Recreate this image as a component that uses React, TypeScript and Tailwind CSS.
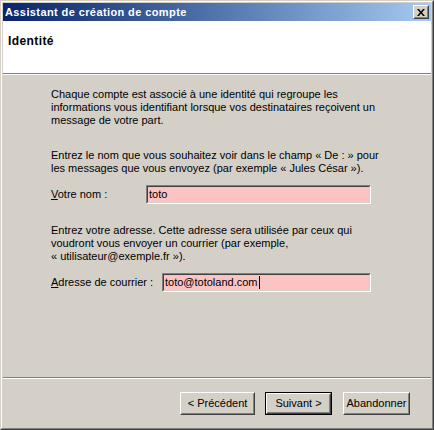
import React from "react";

const font = { fontFamily: '"Liberation Sans", Arial, sans-serif' };

const WinButton: React.FC<{ label: string; isDefault?: boolean; width: string; className?: string }> = ({
  label,
  isDefault,
  width,
  className,
}) => {
  return (
    <div className={`${isDefault ? "border border-black" : ""} ${className ?? ""}`}>
      <div className="border border-t-white border-l-white border-r-[#404040] border-b-[#404040]">
        <div
          className={`flex items-center justify-center border border-t-[#d4d0c8] border-l-[#d4d0c8] border-r-[#808080] border-b-[#808080] bg-[#d4d0c8] text-[11px] text-black ${
            isDefault ? "h-[19px]" : "h-[21px]"
          } ${width}`}
        >
          {label}
        </div>
      </div>
    </div>
  );
};

const Field: React.FC<{ value: string; width: string; caret?: boolean }> = ({ value, width, caret }) => {
  return (
    <div className={`border border-t-[#808080] border-l-[#808080] border-r-white border-b-white ${width}`}>
      <div className="flex h-[17px] items-center border border-t-[#404040] border-l-[#404040] border-r-[#d4d0c8] border-b-[#d4d0c8] bg-[#fcc3c3] pl-[1px] text-[11px] text-black">
        <span>{value}</span>
        {caret && <span className="ml-[1px] inline-block h-[13px] w-px bg-black" />}
      </div>
    </div>
  );
};

export default function App() {
  return (
    <div style={font} className="h-[430px] w-[434px] border border-t-[#d4d0c8] border-l-[#d4d0c8] border-r-[#404040] border-b-[#404040] bg-[#d4d0c8]">
      <div className="flex h-full flex-col border border-t-white border-l-white border-r-[#808080] border-b-[#808080] p-px">
        {/* title bar */}
        <div className="flex h-[18px] items-center justify-between bg-gradient-to-r from-[#0a246a] to-[#a6caf0] pl-[2px] pr-[2px]">
          <span className="text-[11px] font-bold tracking-[0.4px] text-white">Assistant de création de compte</span>
          <div className="border border-t-white border-l-white border-r-[#404040] border-b-[#404040]">
            <div className="flex h-[12px] w-[14px] items-center justify-center border border-t-[#d4d0c8] border-l-[#d4d0c8] border-r-[#808080] border-b-[#808080] bg-[#d4d0c8]">
              <svg width="8" height="7" viewBox="0 0 8 7">
                <path d="M0 0h2l2 2.5L6 0h2L5 3.5 8 7H6L4 4.5 2 7H0l3-3.5z" fill="black" />
              </svg>
            </div>
          </div>
        </div>

        {/* header */}
        <div className="h-[52px] bg-white pl-[5px] pt-[13px] text-[12px] font-bold leading-[14px] tracking-[0.4px] text-black">
          Identité
        </div>
        <div className="h-px bg-[#808080]" />
        <div className="h-px bg-white" />

        {/* body */}
        <div className="flex flex-1 flex-col pl-[48px] pt-[13px] text-[11px] leading-[13px] text-black">
          <p>
            Chaque compte est associé à une identité qui regroupe les
            <br />
            informations vous identifiant lorsque vos destinataires reçoivent un
            <br />
            message de votre part.
          </p>
          <p className="mt-[22px]">
            Entrez le nom que vous souhaitez voir dans le champ « De : » pour
            <br />
            les messages que vous envoyez (par exemple « Jules César »).
          </p>
          <div className="mt-[10px] flex items-center">
            <span className="w-[95px]">
              <span className="underline">V</span>otre nom :
            </span>
            <Field value="toto" width="w-[225px]" />
          </div>
          <p className="mt-[20px]">
            Entrez votre adresse. Cette adresse sera utilisée par ceux qui
            <br />
            voudront vous envoyer un courrier (par exemple,
            <br />« utilisateur@exemple.fr »).
          </p>
          <div className="mt-[10px] flex items-center">
            <span className="w-[111px]">
              <span className="underline">A</span>dresse de courrier :
            </span>
            <Field value="toto@totoland.com" width="w-[209px]" caret />
          </div>
        </div>

        {/* footer */}
        <div className="h-px bg-[#808080]" />
        <div className="h-px bg-white" />
        <div className="flex h-[48px] items-start justify-end gap-[10px] pr-[21px] pt-[13px]">
          <WinButton label="< Précédent" width="w-[73px]" />
          <WinButton label="Suivant >" width="w-[63px]" isDefault />
          <WinButton label="Abandonner" width="w-[65px]" className="ml-px" />
        </div>
      </div>
    </div>
  );
}
